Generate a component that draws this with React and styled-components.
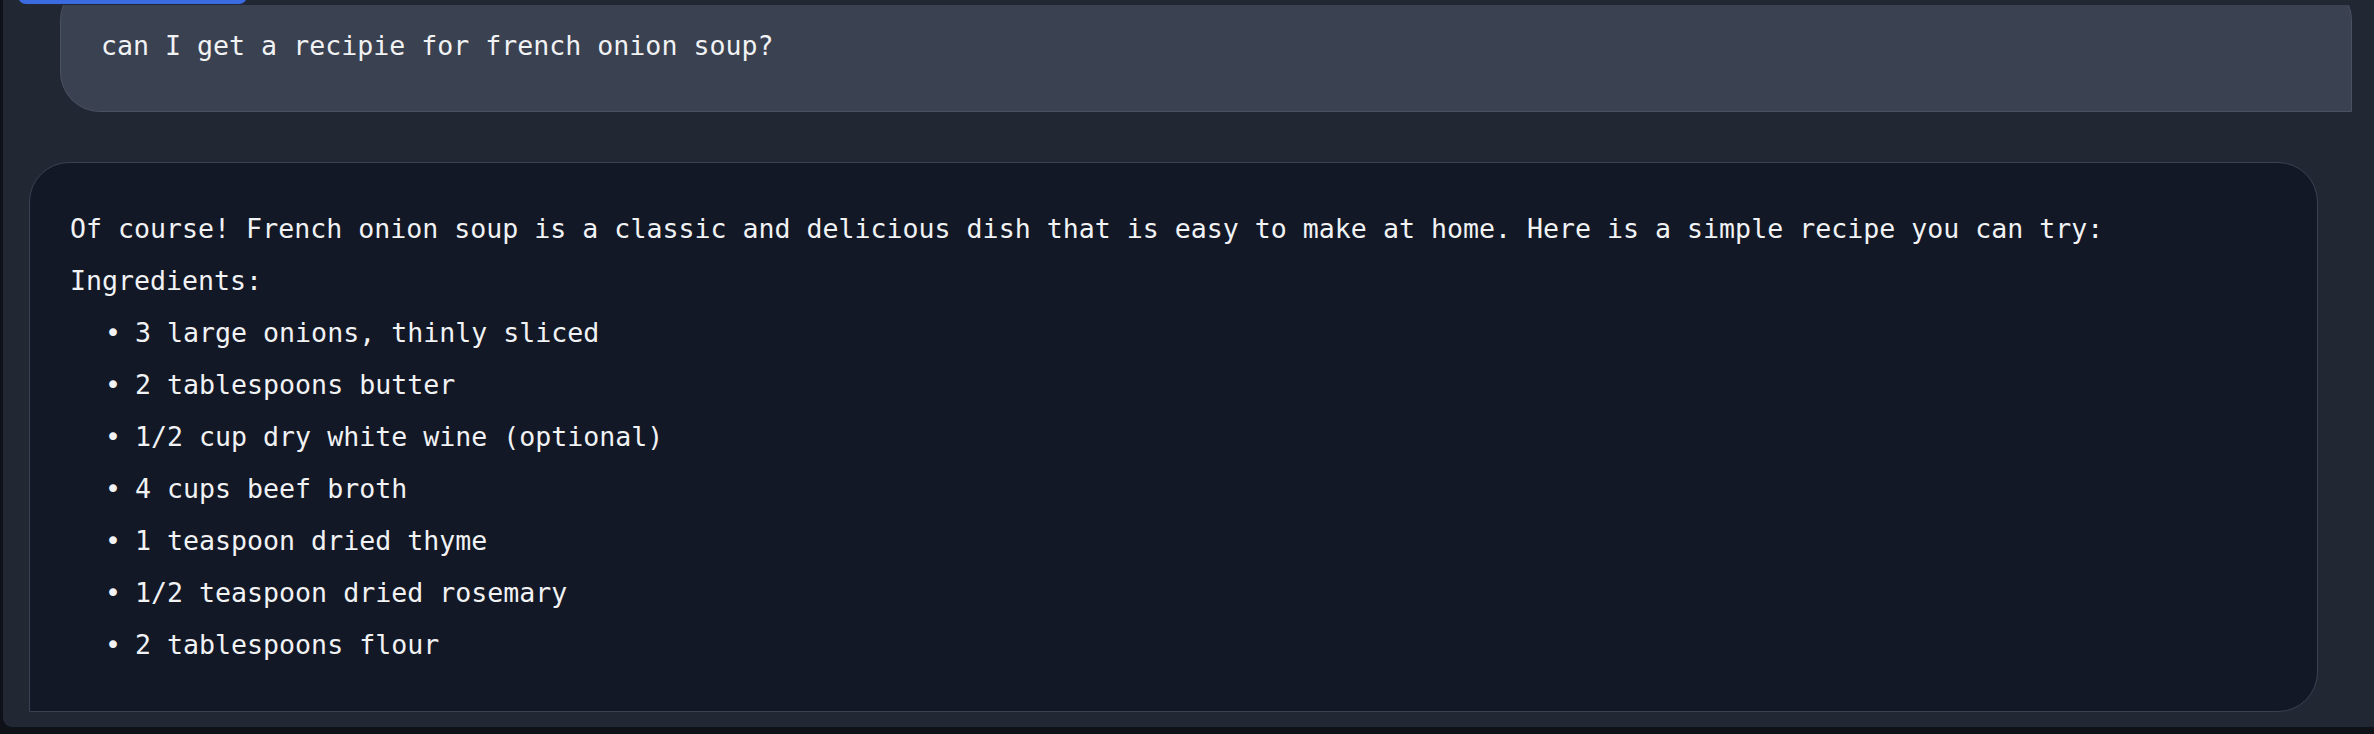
import React from "react";
import styled, { createGlobalStyle } from "styled-components";

const GlobalStyle = createGlobalStyle`
  html, body {
    margin: 0;
    padding: 0;
    background: #0e1118;
  }
  * {
    box-sizing: border-box;
  }
`;

const Shell = styled.div`
  display: flex;
  height: 734px;
  padding-left: 3px;
  background: #0e1118;
  overflow: hidden;
`;

const Panel = styled.main`
  flex: 1;
  display: flex;
  flex-direction: column;
  height: 727px;
  background: #222734;
  border-bottom-left-radius: 9px;
  overflow: hidden;
`;

const TopBar = styled.header`
  position: relative;
  z-index: 2;
  height: 5px;
  flex-shrink: 0;
  padding-left: 15px;
  background: #222734;
`;

const NewChatButton = styled.button`
  display: block;
  width: 229px;
  height: 60px;
  margin-top: -56px;
  border: none;
  border-radius: 0 0 8px 8px;
  background: #3b6be0;
`;

const Scroller = styled.section`
  flex: 1;
  overflow: hidden;
  padding: 0 22px 0 26px;
`;

const Thread = styled.div`
  display: flex;
  flex-direction: column;
  gap: 50px;
  margin-top: -25px;
`;

const Bubble = styled.div`
  border: 1px solid ${(p) => (p.$user ? "#4a5161" : "#3b4150")};
  background: ${(p) => (p.$user ? "#3a4150" : "#131826")};
  border-radius: ${(p) => (p.$user ? "40px 40px 0 40px" : "40px 40px 40px 0")};
  margin: ${(p) => (p.$user ? "0 0 0 31px" : "0 34px 0 0")};
  padding: ${(p) => (p.$user ? "39px 40px" : "40px")};
  color: #f1f2f4;
  font-family: "DejaVu Sans Mono", "Liberation Mono", monospace;
  font-size: 26.6px;
  line-height: 52px;
`;

const Line = styled.p`
  margin: 0;
  white-space: pre-wrap;
`;

const List = styled.ul`
  margin: 0;
  padding: 0 0 0 35px;
  list-style: none;
`;

const Item = styled.li`
  display: flex;

  &::before {
    content: "•";
    width: 16px;
    margin-right: 14px;
    text-align: center;
  }
`;

const ingredients = [
  "3 large onions, thinly sliced",
  "2 tablespoons butter",
  "1/2 cup dry white wine (optional)",
  "4 cups beef broth",
  "1 teaspoon dried thyme",
  "1/2 teaspoon dried rosemary",
  "2 tablespoons flour",
];

export default function App() {
  return (
    <>
      <GlobalStyle />
      <Shell>
        <Panel>
          <TopBar>
            <NewChatButton aria-label="New chat" />
          </TopBar>
          <Scroller>
            <Thread>
              <Bubble $user>
                <Line>can I get a recipie for french onion soup?</Line>
              </Bubble>
              <Bubble>
                <Line>
                  Of course! French onion soup is a classic and delicious dish
                  that is easy to make at home. Here is a simple recipe you can
                  try:
                </Line>
                <Line>Ingredients:</Line>
                <List>
                  {ingredients.map((item) => (
                    <Item key={item}>{item}</Item>
                  ))}
                </List>
              </Bubble>
            </Thread>
          </Scroller>
        </Panel>
      </Shell>
    </>
  );
}
